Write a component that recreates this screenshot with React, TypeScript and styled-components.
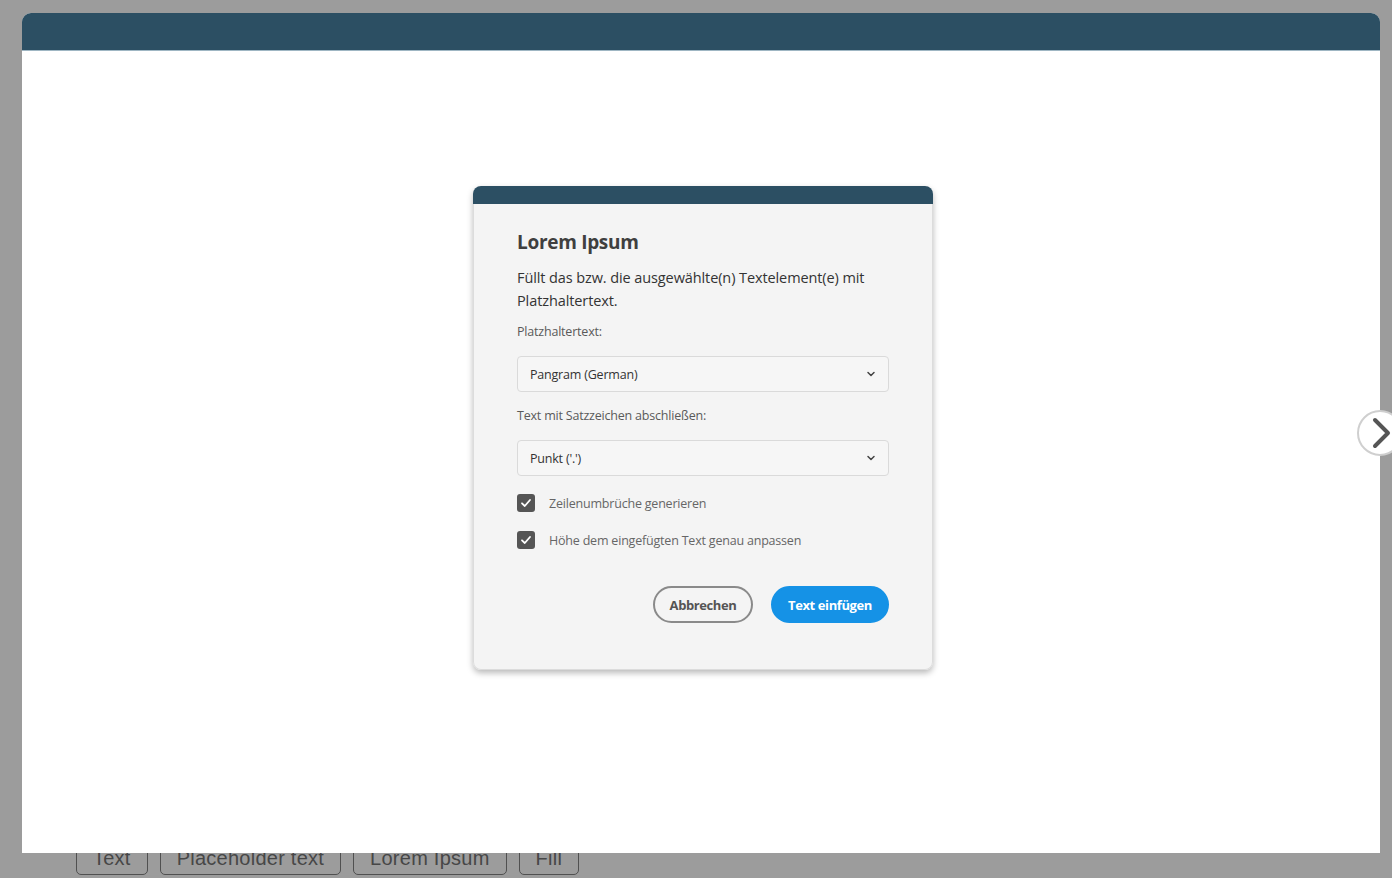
import { createGlobalStyle, styled } from "styled-components";

const GlobalStyle = createGlobalStyle`
  html, body {
    margin: 0;
    padding: 0;
    background: #9c9c9c;
    overflow: hidden;
  }
  * {
    box-sizing: border-box;
  }
`;

const tags = ["Text", "Placeholder text", "Lorem Ipsum", "Fill"];

export default function App() {
  return (
    <>
      <GlobalStyle />
      <Page>
        <TagRow>
          {tags.map((tag) => (
            <Tag key={tag}>{tag}</Tag>
          ))}
        </TagRow>
      </Page>

      <Frame>
        <FrameHeader />
        <FrameBody>
          <Dialog>
            <DialogBar />
            <DialogBody>
              <Title>Lorem Ipsum</Title>
              <Description>
                Füllt das bzw. die ausgewählte(n) Textelement(e) mit
                Platzhaltertext.
              </Description>

              <FieldLabel>Platzhaltertext:</FieldLabel>
              <Select>
                <span>Pangram (German)</span>
                <SmallChevron />
              </Select>

              <FieldLabel>Text mit Satzzeichen abschließen:</FieldLabel>
              <Select>
                <span>Punkt ('.')</span>
                <SmallChevron />
              </Select>

              <CheckList>
                <CheckRow>
                  <CheckBox />
                  <span>Zeilenumbrüche generieren</span>
                </CheckRow>
                <CheckRow>
                  <CheckBox />
                  <span>Höhe dem eingefügten Text genau anpassen</span>
                </CheckRow>
              </CheckList>

              <Actions>
                <Button $variant="outline">Abbrechen</Button>
                <Button $variant="primary">Text einfügen</Button>
              </Actions>
            </DialogBody>
          </Dialog>
        </FrameBody>

        <NextButton aria-label="Weiter">
          <svg width="22" height="34" viewBox="0 0 22 34" fill="none">
            <path
              d="M4 4 L17 17 L4 30"
              stroke="#555"
              strokeWidth="4"
              strokeLinecap="round"
              strokeLinejoin="round"
            />
          </svg>
        </NextButton>
      </Frame>
    </>
  );
}

function SmallChevron() {
  return (
    <svg width="10" height="10" viewBox="0 0 10 10" fill="none">
      <path
        d="M2 3.5 L5 6.5 L8 3.5"
        stroke="#444"
        strokeWidth="1.5"
        strokeLinecap="round"
        strokeLinejoin="round"
      />
    </svg>
  );
}

function CheckBox() {
  return (
    <Box>
      <svg width="12" height="12" viewBox="0 0 12 12" fill="none">
        <path
          d="M2 6.3 L4.8 9 L10 3"
          stroke="#fff"
          strokeWidth="1.8"
          strokeLinecap="round"
          strokeLinejoin="round"
        />
      </svg>
    </Box>
  );
}

const Page = styled.div`
  height: 100vh;
  display: flex;
  flex-direction: column;
  justify-content: flex-end;
`;

const TagRow = styled.div`
  display: flex;
  gap: 12px;
  padding: 0 0 3px 76px;
`;

const Tag = styled.div`
  height: 36px;
  padding: 2px 16px 0;
  display: flex;
  align-items: center;
  border: 1.5px solid #505050;
  border-radius: 5px;
  font-family: "Liberation Sans", Arial, sans-serif;
  font-size: 20px;
  letter-spacing: 0.25px;
  color: #474747;
`;

const Frame = styled.div`
  position: fixed;
  top: 13px;
  left: 22px;
  width: 1358px;
  height: 840px;
  display: flex;
  flex-direction: column;
  border-radius: 9px 9px 0 0;
  background: #fff;
`;

const FrameHeader = styled.div`
  height: 38px;
  background: #2c4f63;
  border-radius: 9px 9px 0 0;
  border-bottom: 1px solid #9fb6c3;
`;

const FrameBody = styled.div`
  flex: 1;
  display: flex;
  justify-content: center;
  padding: 135px 0 0 4px;
`;

const Dialog = styled.div`
  width: 460px;
  height: 484px;
  display: flex;
  flex-direction: column;
  border-radius: 8px;
  box-shadow: 0 3px 6px rgba(0, 0, 0, 0.28);
  font-family: "Open Sans", "Noto Sans", sans-serif;
`;

const DialogBar = styled.div`
  height: 18px;
  background: #2c4f63;
  border-radius: 8px 8px 0 0;
`;

const DialogBody = styled.div`
  flex: 1;
  padding: 24px 43px 0;
  background: #f4f4f4;
  border: 1px solid #dcdcdc;
  border-top: none;
  border-radius: 0 0 8px 8px;
`;

const Title = styled.h1`
  margin: 0;
  font-size: 19px;
  line-height: 28px;
  font-weight: 700;
  color: #3f3f3f;
  letter-spacing: -0.3px;
`;

const Description = styled.p`
  margin: 10px 0 0;
  font-size: 14.5px;
  line-height: 23px;
  color: #333;
  letter-spacing: -0.1px;
`;

const FieldLabel = styled.div`
  margin-top: 10px;
  font-size: 12.5px;
  line-height: 20px;
  color: #5a5a5a;
  letter-spacing: -0.2px;
`;

const Select = styled.div`
  margin: 14px 0 14px;
  height: 36px;
  padding: 0 12px;
  display: flex;
  align-items: center;
  justify-content: space-between;
  background: #f6f6f6;
  border: 1px solid #dadada;
  border-radius: 4px;
  font-size: 12.5px;
  color: #333;
  letter-spacing: -0.2px;
`;

const CheckList = styled.div`
  display: flex;
  flex-direction: column;
  gap: 19px;
  margin-top: 18px;
`;

const CheckRow = styled.label`
  display: flex;
  align-items: center;
  gap: 14px;
  font-size: 12.5px;
  color: #666;
  letter-spacing: -0.2px;
`;

const Box = styled.span`
  width: 18px;
  height: 18px;
  border-radius: 3px;
  background: #555;
  display: flex;
  align-items: center;
  justify-content: center;
`;

const Actions = styled.div`
  margin-top: 37px;
  display: flex;
  justify-content: flex-end;
  gap: 18px;
`;

const Button = styled.button<{ $variant: "outline" | "primary" }>`
  height: 37px;
  padding: 0;
  border-radius: 19px;
  font-family: "Open Sans", "Noto Sans", sans-serif;
  font-size: 13px;
  font-weight: 700;
  letter-spacing: -0.4px;
  cursor: pointer;
  border: 2px solid ${({ $variant }) => ($variant === "primary" ? "#1592e6" : "#8a8a8a")};
  background: ${({ $variant }) => ($variant === "primary" ? "#1592e6" : "transparent")};
  color: ${({ $variant }) => ($variant === "primary" ? "#fff" : "#555")};
  width: ${({ $variant }) => ($variant === "primary" ? "118px" : "100px")};
`;

const NextButton = styled.button`
  position: absolute;
  top: 397px;
  right: -23px;
  width: 46px;
  height: 46px;
  border-radius: 50%;
  border: 2px solid #cfcfcf;
  background: #fff;
  display: flex;
  align-items: center;
  justify-content: center;
  padding: 0 0 0 4px;
  cursor: pointer;
`;
